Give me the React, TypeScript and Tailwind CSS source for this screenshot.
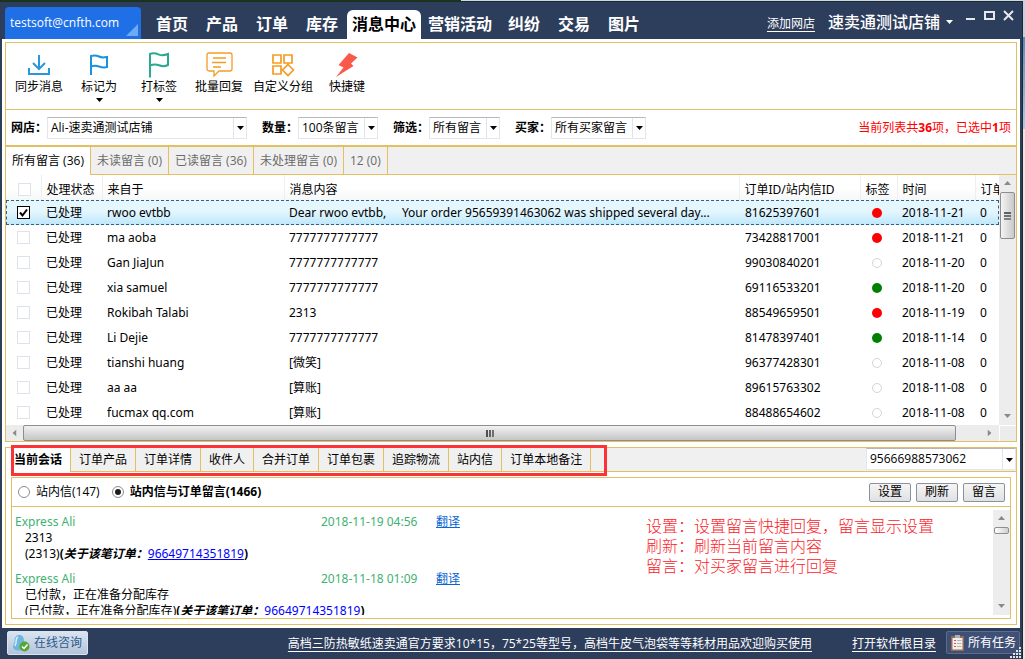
import { useState } from "react"
import clsx from "clsx"

const navItems = ["首页", "产品", "订单", "库存", "消息中心", "营销活动", "纠纷", "交易", "图片"]

const filters = [
  { id: "shop", label: "网店：", value: "Ali-速卖通测试店铺", width: "w-[200px]" },
  { id: "count", label: "数量：", value: "100条留言", width: "w-[80px]" },
  { id: "state", label: "筛选：", value: "所有留言", width: "w-[71px]" },
  { id: "buyer", label: "买家：", value: "所有买家留言", width: "w-[95px]" },
]

const messageTabs = ["所有留言 (36)", "未读留言 (0)", "已读留言 (36)", "未处理留言 (0)", "12 (0)"]

const detailTabs = ["当前会话", "订单产品", "订单详情", "收件人", "合并订单", "订单包裹", "追踪物流", "站内信", "订单本地备注"]

type Tag = "red" | "green" | "none"

const rows: { from: string; text: string; id: string; tag: Tag; date: string }[] = [
  {
    from: "rwoo evtbb",
    text: "Dear rwoo evtbb,\u00a0\u00a0\u00a0\u00a0 Your order 95659391463062 was shipped several day...",
    id: "81625397601",
    tag: "red",
    date: "2018-11-21",
  },
  { from: "ma aoba", text: "7777777777777", id: "73428817001", tag: "red", date: "2018-11-21" },
  { from: "Gan JiaJun", text: "7777777777777", id: "99030840201", tag: "none", date: "2018-11-20" },
  { from: "xia samuel", text: "7777777777777", id: "69116533201", tag: "green", date: "2018-11-20" },
  { from: "Rokibah Talabi", text: "2313", id: "88549659501", tag: "red", date: "2018-11-19" },
  { from: "Li Dejie", text: "7777777777777", id: "81478397401", tag: "green", date: "2018-11-14" },
  { from: "tianshi huang", text: "[微笑]", id: "96377428301", tag: "none", date: "2018-11-08" },
  { from: "aa aa", text: "[算账]", id: "89615763302", tag: "none", date: "2018-11-08" },
  { from: "fucmax qq.com", text: "[算账]", id: "88488654602", tag: "none", date: "2018-11-08" },
]

const tagColors: Record<Tag, string> = {
  red: "bg-[#ff0000]",
  green: "bg-[#008000]",
  none: "border border-[#d4d4d4] bg-white",
}

const chat = [
  { from: "Express Ali", time: "2018-11-19 04:56", text: "2313", order: "96649714351819" },
  { from: "Express Ali", time: "2018-11-18 01:09", text: "已付款，正在准备分配库存", order: "96649714351819" },
]

function Caret({ className }: { className?: string }) {
  return (
    <svg viewBox="0 0 7 4" className={clsx("h-1 w-[7px]", className)} fill="currentColor">
      <path d="M0 0h7L3.5 4z" />
    </svg>
  )
}

function Select({ id, value, width, label }: { id: string; value: string; width: string; label?: string }) {
  return (
    <div className={clsx("relative", width)}>
      <select
        id={id}
        aria-label={label}
        className="block h-[22px] w-full appearance-none border border-[#e3e6ef] border-t-[#b4b6ba] bg-white pl-[3px] text-xs outline-none"
      >
        <option>{value}</option>
      </select>
      <div className="pointer-events-none absolute inset-y-px right-px flex w-[13px] items-center justify-center border-l border-[#dfe3ec]">
        <Caret className="text-black" />
      </div>
    </div>
  )
}

function SyncIcon() {
  return (
    <svg width="22" height="24" viewBox="0 0 22 24" fill="none" stroke="#2797df" strokeWidth="2">
      <path d="M11 2v14M5 10l6 6 6-6M1 15v6h20v-6" />
    </svg>
  )
}

function BlueFlagIcon() {
  return (
    <svg width="20" height="24" viewBox="0 0 20 24" fill="none" stroke="#1b92dc" strokeWidth="2">
      <path d="M2 22V3c3-1 5-1 8 .5s5 1 8 .5v10c-3 1-5 .5-8-.5s-5-1-8 0" />
    </svg>
  )
}

function GreenFlagIcon() {
  return (
    <svg width="22" height="26" viewBox="0 0 22 26" fill="none" stroke="#2aa98f" strokeWidth="2">
      <path d="M2 25.500V2c3-1.300 6-.6 9 .6s6 .6 9-.6v11c-3 1.500-6 1.500-9 .3s-6-1-9 .2" />
    </svg>
  )
}

function ReplyIcon() {
  return (
    <svg width="27" height="26" viewBox="0 0 27 26" fill="none" stroke="#f39c26" strokeWidth="1.300">
      <path d="M3 1h21a2 2 0 0 1 2 2v14a2 2 0 0 1-2 2H13l-5 5v-5H3a2 2 0 0 1-2-2V3a2 2 0 0 1 2-2z" />
      <path d="M7 6h13M6 10.500h14M7 15h8" />
    </svg>
  )
}

function GroupIcon() {
  return (
    <svg width="24" height="24" viewBox="0 0 24 24" fill="none" stroke="#f39c26" strokeWidth="1.700">
      <path d="M2 2h8v8H2zM13 2h8v8h-8zM2 13h8v8H2zM17 11.500l5.500 5.500-5.500 5.500-5.500-5.500z" />
    </svg>
  )
}

function BoltIcon() {
  return (
    <svg width="24" height="26" viewBox="0 0 24 26" fill="#f9594b">
      <path d="M14 1l8.500 4.500L16 11.500l2.500 2.500L1 25l7.500-9.500-5-2.500z" />
    </svg>
  )
}

const tools = [
  { label: "同步消息", icon: <SyncIcon />, width: "w-[60px]", menu: false },
  { label: "标记为", icon: <BlueFlagIcon />, width: "w-[60px]", menu: true },
  { label: "打标签", icon: <GreenFlagIcon />, width: "w-[60px]", menu: true },
  { label: "批量回复", icon: <ReplyIcon />, width: "w-[60px]", menu: false },
  { label: "自定义分组", icon: <GroupIcon />, width: "w-[68px]", menu: false },
  { label: "快捷键", icon: <BoltIcon />, width: "w-[60px]", menu: false },
]

function TitleBar() {
  return (
    <header className="flex h-[37px] shrink-0 bg-[#2d3d5c] text-white">
      <button className="mt-[5px] ml-[3px] flex w-[136px] justify-between rounded-t-sm bg-[#1f70e6] pr-[3px] pl-[5px] text-left">
        <span className="pt-2 text-xs">testsoft@cnfth.com</span>
        <svg width="12" height="12" viewBox="0 0 12 12" className="mb-[3px] self-end" fill="#6fabf5">
          <path d="M12 0v12H0z" />
        </svg>
      </button>
      <nav className="ml-[6px] flex pt-2">
        {navItems.map((item) => (
          <a
            key={item}
            href="#"
            className={clsx(
              "flex min-w-[50px] items-center justify-center rounded-t-md pb-0.5 text-base font-bold",
              item === "消息中心" ? "bg-white px-[5px] text-black" : "px-[7px]"
            )}
          >
            {item}
          </a>
        ))}
      </nav>
      <div className="ml-auto flex pr-2">
        <a href="#" className="mt-[14px] text-xs underline underline-offset-3">
          添加网店
        </a>
        <button className="mt-2 ml-[13px] flex h-6 items-center gap-1.5 text-base font-medium">
          速卖通测试店铺
          <Caret />
        </button>
        <div className="mt-1.5 ml-3 flex h-[14px] gap-2 text-[#e6e8ec]">
          <button aria-label="最小化">
            <svg width="11" height="14" viewBox="0 0 11 14">
              <path d="M1 11h9" stroke="currentColor" strokeWidth="2" />
            </svg>
          </button>
          <button aria-label="最大化">
            <svg width="11" height="14" viewBox="0 0 11 14" fill="none">
              <path d="M1 4h9v7H1z" stroke="currentColor" strokeWidth="2" />
            </svg>
          </button>
          <button aria-label="关闭">
            <svg width="11" height="14" viewBox="0 0 11 14">
              <path d="M1 3l9 9M10 3l-9 9" stroke="currentColor" strokeWidth="2" />
            </svg>
          </button>
        </div>
      </div>
    </header>
  )
}

function MessageTable() {
  const [checked, setChecked] = useState<string[]>([rows[0].id])

  const toggle = (id: string) =>
    setChecked((prev) => (prev.includes(id) ? prev.filter((x) => x !== id) : [...prev, id]))

  return (
    <table className="w-full table-fixed border-collapse text-left font-['Noto_Sans','Noto_Sans_CJK_SC',sans-serif] text-xs leading-4">
      <colgroup>
        <col className="w-[35px]" />
        <col className="w-[61px]" />
        <col className="w-[182px]" />
        <col />
        <col className="w-[121px]" />
        <col className="w-[37px]" />
        <col className="w-[78px]" />
        <col className="w-[24px]" />
      </colgroup>
      <thead>
        <tr className="h-[25px] bg-linear-to-b from-white from-50% to-[#f6f7f8]">
          <th className="pl-3">
            <input
              type="checkbox"
              aria-label="全选"
              className="mt-1 block size-[13px] appearance-none border border-[#dfe2ea] bg-white"
            />
          </th>
          {["处理状态", "来自于", "消息内容", "订单ID/站内信ID", "标签", "时间", "订单"].map((title) => (
            <th key={title} className="overflow-hidden border-l border-[#eceef0] pt-1 pl-[5px] font-normal whitespace-nowrap">
              {title}
            </th>
          ))}
        </tr>
      </thead>
      <tbody>
        {rows.map((row, i) => (
          <tr
            key={row.id}
            className={clsx(
              "h-[25px]",
              i === 0 &&
                "bg-linear-to-b from-[#e4f6fe] from-45% to-[#bce7fb] outline-1 -outline-offset-1 outline-[#35607c] outline-dashed"
            )}
          >
            <td className="pl-[11px]">
              <label className="flex size-[13px]">
                <input
                  type="checkbox"
                  aria-label={row.from}
                  checked={checked.includes(row.id)}
                  onChange={() => toggle(row.id)}
                  className="peer size-[13px] appearance-none border border-[#dfe2ea] bg-white checked:border-black"
                />
                <svg viewBox="0 0 13 13" className="-ml-[13px] hidden size-[13px] peer-checked:block" fill="none">
                  <path d="M3 6.500l2.500 3L10 3.500" stroke="#000" strokeWidth="2" />
                </svg>
              </label>
            </td>
            <td className="pl-[5px]">已处理</td>
            <td className="pl-[5px]">{row.from}</td>
            <td className="truncate px-[5px]">{row.text}</td>
            <td className="pl-[6px]">{row.id}</td>
            <td className="pr-[3px]">
              <div className={clsx("mx-auto size-[10px] rounded-full", tagColors[row.tag])} />
            </td>
            <td className="pl-[5px] whitespace-nowrap">{row.date}</td>
            <td className="pl-[5px]">0</td>
          </tr>
        ))}
      </tbody>
    </table>
  )
}

function MessageList() {
  return (
    <section className="border border-[#e2c062]">
      <div className="flex h-[66px] pt-2 pl-[3px]">
        {tools.map((tool) => (
          <button key={tool.label} className={clsx("flex h-[52px] flex-col items-center text-xs", tool.width)}>
            <span className="flex h-7 items-center">{tool.icon}</span>
            <span className="leading-4">{tool.label}</span>
            {tool.menu && <Caret className="mt-[3px] shrink-0 text-black" />}
          </button>
        ))}
      </div>

      <div className="flex h-[36px] items-center gap-[15px] border-t border-[#e2c062] pr-[5px] pl-[5px] text-xs">
        {filters.map((f) => (
          <div key={f.id} className="flex items-center">
            <label htmlFor={f.id} className="w-9 font-bold whitespace-nowrap">
              {f.label}
            </label>
            <Select id={f.id} value={f.value} width={f.width} />
          </div>
        ))}
        <p className="ml-auto text-[#ff0000]">
          当前列表共<b>36</b>项，已选中<b>1</b>项
        </p>
      </div>

      <div className="flex h-[30px] border-t-2 border-[#e2c062] bg-[#f0f0f0] text-xs">
        {messageTabs.map((tab, i) => (
          <button
            key={tab}
            className={clsx(
              "border-r border-[#e2c062] px-[6px]",
              i === 0 ? "bg-white text-black" : "border-b text-[#6a6a6a]"
            )}
          >
            {tab}
          </button>
        ))}
        <div className="flex-1 border-b border-[#e2c062]" />
      </div>

      <div className="flex">
        <div className="min-w-0 flex-1">
          <MessageTable />
        </div>
        <div className="flex w-[17px] flex-col items-center bg-[#ededed] text-[#8a8a8a]">
          <Caret className="mt-1.5 rotate-180" />
          <div className="mt-[7px] flex h-[47px] w-[15px] flex-col items-center justify-center gap-px rounded-xs border border-[#8e8e8e] bg-linear-to-r from-[#f4f4f4] to-[#c9c9cb]">
            <div className="h-0.5 w-[7px] bg-[#606060]" />
            <div className="h-0.5 w-[7px] bg-[#707070]" />
            <div className="h-0.5 w-[7px] bg-[#808080]" />
          </div>
          <Caret className="mt-auto mb-[7px]" />
        </div>
      </div>

      <div className="flex h-4 bg-[#ececec] text-[#8a8a8a]">
        <div className="flex w-[17px] items-center justify-center">
          <Caret className="rotate-90" />
        </div>
        <div className="flex flex-1 items-center justify-center gap-px rounded-xs border border-[#8e8e8e] bg-linear-to-b from-[#f2f2f2] to-[#c4c5c7]">
          <div className="h-[7px] w-0.5 bg-[#505050]" />
          <div className="h-[7px] w-0.5 bg-[#606060]" />
          <div className="h-[7px] w-0.5 bg-[#707070]" />
        </div>
        <div className="flex w-[43px] items-center justify-end pr-1.5">
          <Caret className="-rotate-90" />
        </div>
        <div className="w-[17px] border-t border-l border-white" />
      </div>
    </section>
  )
}

function ChatPanel() {
  return (
    <section className="mt-[5px] flex min-h-0 flex-1 flex-col border border-[#e2c062]">
      <div className="relative flex h-6 shrink-0 bg-[#f0f0f0] text-xs">
        {detailTabs.map((tab, i) => (
          <button
            key={tab}
            className={clsx(
              "border-r border-[#e2c062] px-2",
              i === 0 ? "bg-white font-bold" : "border-b"
            )}
          >
            {tab}
          </button>
        ))}
        <div className="flex flex-1 justify-end border-b border-[#e2c062]">
          <Select id="order" label="订单号" value="95666988573062" width="w-[150px]" />
        </div>
        {/* highlight frame around the tabs */}
        <div className="pointer-events-none absolute -top-[3px] left-[5px] h-[31px] w-[596px] border-3 border-[#fb3338]" />
      </div>

      <div className="m-[5px] flex min-h-0 flex-1 flex-col border border-[#e2c062]">
        <div className="flex h-[29px] shrink-0 items-center border-b border-[#e2c062] pr-[5px] pl-1.5 text-xs">
          <label className="flex items-center gap-[6px]">
            <Radio />
            站内信(147)
          </label>
          <label className="ml-3 flex items-center gap-[6px] font-bold">
            <Radio defaultChecked />
            站内信与订单留言(1466)
          </label>
          <div className="ml-auto flex gap-[5px]">
            {["设置", "刷新", "留言"].map((text) => (
              <button
                key={text}
                className="h-[19px] w-[42px] rounded-xs border border-[#8b929e] bg-linear-to-b from-[#f5f5f5] to-[#e0e1e3] leading-4"
              >
                {text}
              </button>
            ))}
          </div>
        </div>

        <div className="relative my-[3px] flex min-h-0 flex-1 overflow-hidden">
          <div className="flex-1 overflow-hidden pt-1 pl-[3px] font-['Noto_Sans','Noto_Sans_CJK_SC',sans-serif] text-xs leading-4">
            {chat.map((msg) => (
              <article key={msg.time} className="mb-[9px]">
                <div className="flex text-[#3fb272]">
                  <span className="w-[306px]">{msg.from}</span>
                  <span className="w-[115px]">{msg.time}</span>
                  <a href="#" className="text-[#0a66d0] underline">
                    翻译
                  </a>
                </div>
                <div className="pl-2.5">
                  <p>{msg.text}</p>
                  <p>
                    ({msg.text})<b>(<i>关于该笔订单：</i></b>
                    <a href="#" className="text-[#0000ff] underline">
                      {msg.order}
                    </a>
                    <b>)</b>
                  </p>
                </div>
              </article>
            ))}
          </div>
          <div className="pointer-events-none absolute top-[5px] right-[76px] font-['Noto_Sans_CJK_SC',sans-serif] text-base leading-5 font-light text-[#fb2228]">
            <p>设置：设置留言快捷回复，留言显示设置</p>
            <p>刷新：刷新当前留言内容</p>
            <p>留言：对买家留言进行回复</p>
          </div>
          <div className="flex w-[17px] flex-col items-center bg-[#ededed] text-[#8a8a8a]">
            <Caret className="mt-1.5 rotate-180" />
            <div className="mt-[7px] h-[7px] w-[15px] rounded-xs border border-[#8e8e8e] bg-linear-to-r from-white to-[#d0d0d0]" />
            <Caret className="mt-auto mb-[7px]" />
          </div>
        </div>
      </div>
    </section>
  )
}

function Radio({ defaultChecked }: { defaultChecked?: boolean }) {
  return (
    <input
      type="radio"
      name="source"
      defaultChecked={defaultChecked}
      className="size-3 appearance-none rounded-full border border-[#8a8d92] bg-white bg-clip-content p-0.5 checked:bg-[#1c1c1c]"
    />
  )
}

function StatusBar() {
  return (
    <footer className="flex h-[31px] shrink-0 items-start bg-[#2d3d5c] pl-[5px] text-xs text-white">
      <button className="mt-[3px] flex h-6 w-[81px] items-center gap-1 rounded-xs border border-[#dbe3f0] bg-linear-to-b from-[#dae3f0] to-[#b4c4da] pl-1 text-[#2c5c8c]">
        <svg width="18" height="18" viewBox="0 0 18 18">
          <path d="M7 1c3 0 5 2 5 5.500l2 5c0 3-3 5-7 5s-6-1.500-6-4l1.500-5C2.500 3.500 4 1 7 1z" fill="#6db7dd" />
          <path d="M6 3c-2 1-2 4-2 6l-1 3" stroke="#d5eefa" strokeWidth="1.500" fill="none" />
          <circle cx="12.500" cy="12.500" r="5" fill="#58a63a" />
          <path d="M10 12.500l2 2 3.500-4" stroke="#fff" strokeWidth="1.500" fill="none" />
        </svg>
        在线咨询
      </button>
      <a href="#" className="mr-10 ml-auto pt-2 leading-4 whitespace-nowrap underline underline-offset-3">
        高档三防热敏纸速卖通官方要求10*15，75*25等型号，高档牛皮气泡袋等等耗材用品欢迎购买使用
      </a>
      <a href="#" className="pt-2 leading-4 underline underline-offset-3">
        打开软件根目录
      </a>
      <button className="mt-[3px] ml-2.5 flex h-[23px] items-center gap-1 rounded-xs border border-[#5c6c8c] bg-[#3f5076] pr-[3px] pl-1">
        <svg width="13" height="17" viewBox="0 0 13 17">
          <path d="M0 2h13v15H0z" fill="#9a6a50" />
          <path d="M1.500 4h10v11.500h-10z" fill="#f1eeee" />
          <path d="M4 1h5v3H4z" fill="#a9b0ba" />
          <path d="M3 6.500h2M3 9.500h2M3 12.500h2" stroke="#d55" />
          <path d="M6 6.500h4.500M6 9.500h4.500M6 12.500h4.500" stroke="#b5b5b5" />
        </svg>
        所有任务
      </button>
      <svg width="12" height="12" viewBox="0 0 12 12" className="-ml-2.5 self-end" fill="#dfe3ea">
        <path d="M9 0h2v2H9zM6 3h2v2H6zM9 3h2v2H9zM3 6h2v2H3zM6 6h2v2H6zM9 6h2v2H9zM0 9h2v2H0zM3 9h2v2H3zM6 9h2v2H6zM9 9h2v2H9z" />
      </svg>
    </footer>
  )
}

export default function App() {
  return (
    <div className="flex h-screen flex-col overflow-hidden bg-[#ececec] font-['Open_Sans','Noto_Sans_CJK_SC',sans-serif] text-black">
      {/* sliver of desktop above the window */}
      <div className="flex h-px shrink-0">
        <div className="w-[45%] bg-[#0f3d10]" />
        <div className="flex-1 bg-[#c3dce8]" />
      </div>
      <div className="flex min-h-0 flex-1">
        <div className="flex min-w-0 flex-1 flex-col border-t border-r border-[#23282e] bg-[#2d3d5c] pl-[2px]">
          <TitleBar />
          <main className="mr-[2px] flex min-h-0 flex-1 flex-col bg-white p-[3px]">
            <MessageList />
            <ChatPanel />
          </main>
          <StatusBar />
        </div>
        <div className="flex w-[2px] flex-col bg-[#e6e6e6]">
          <div className="h-9 bg-[#bcd5e6]" />
          <div className="h-[92px] bg-linear-to-b from-[#4d8fc4] to-[#a9cdea]" />
        </div>
      </div>
    </div>
  )
}
